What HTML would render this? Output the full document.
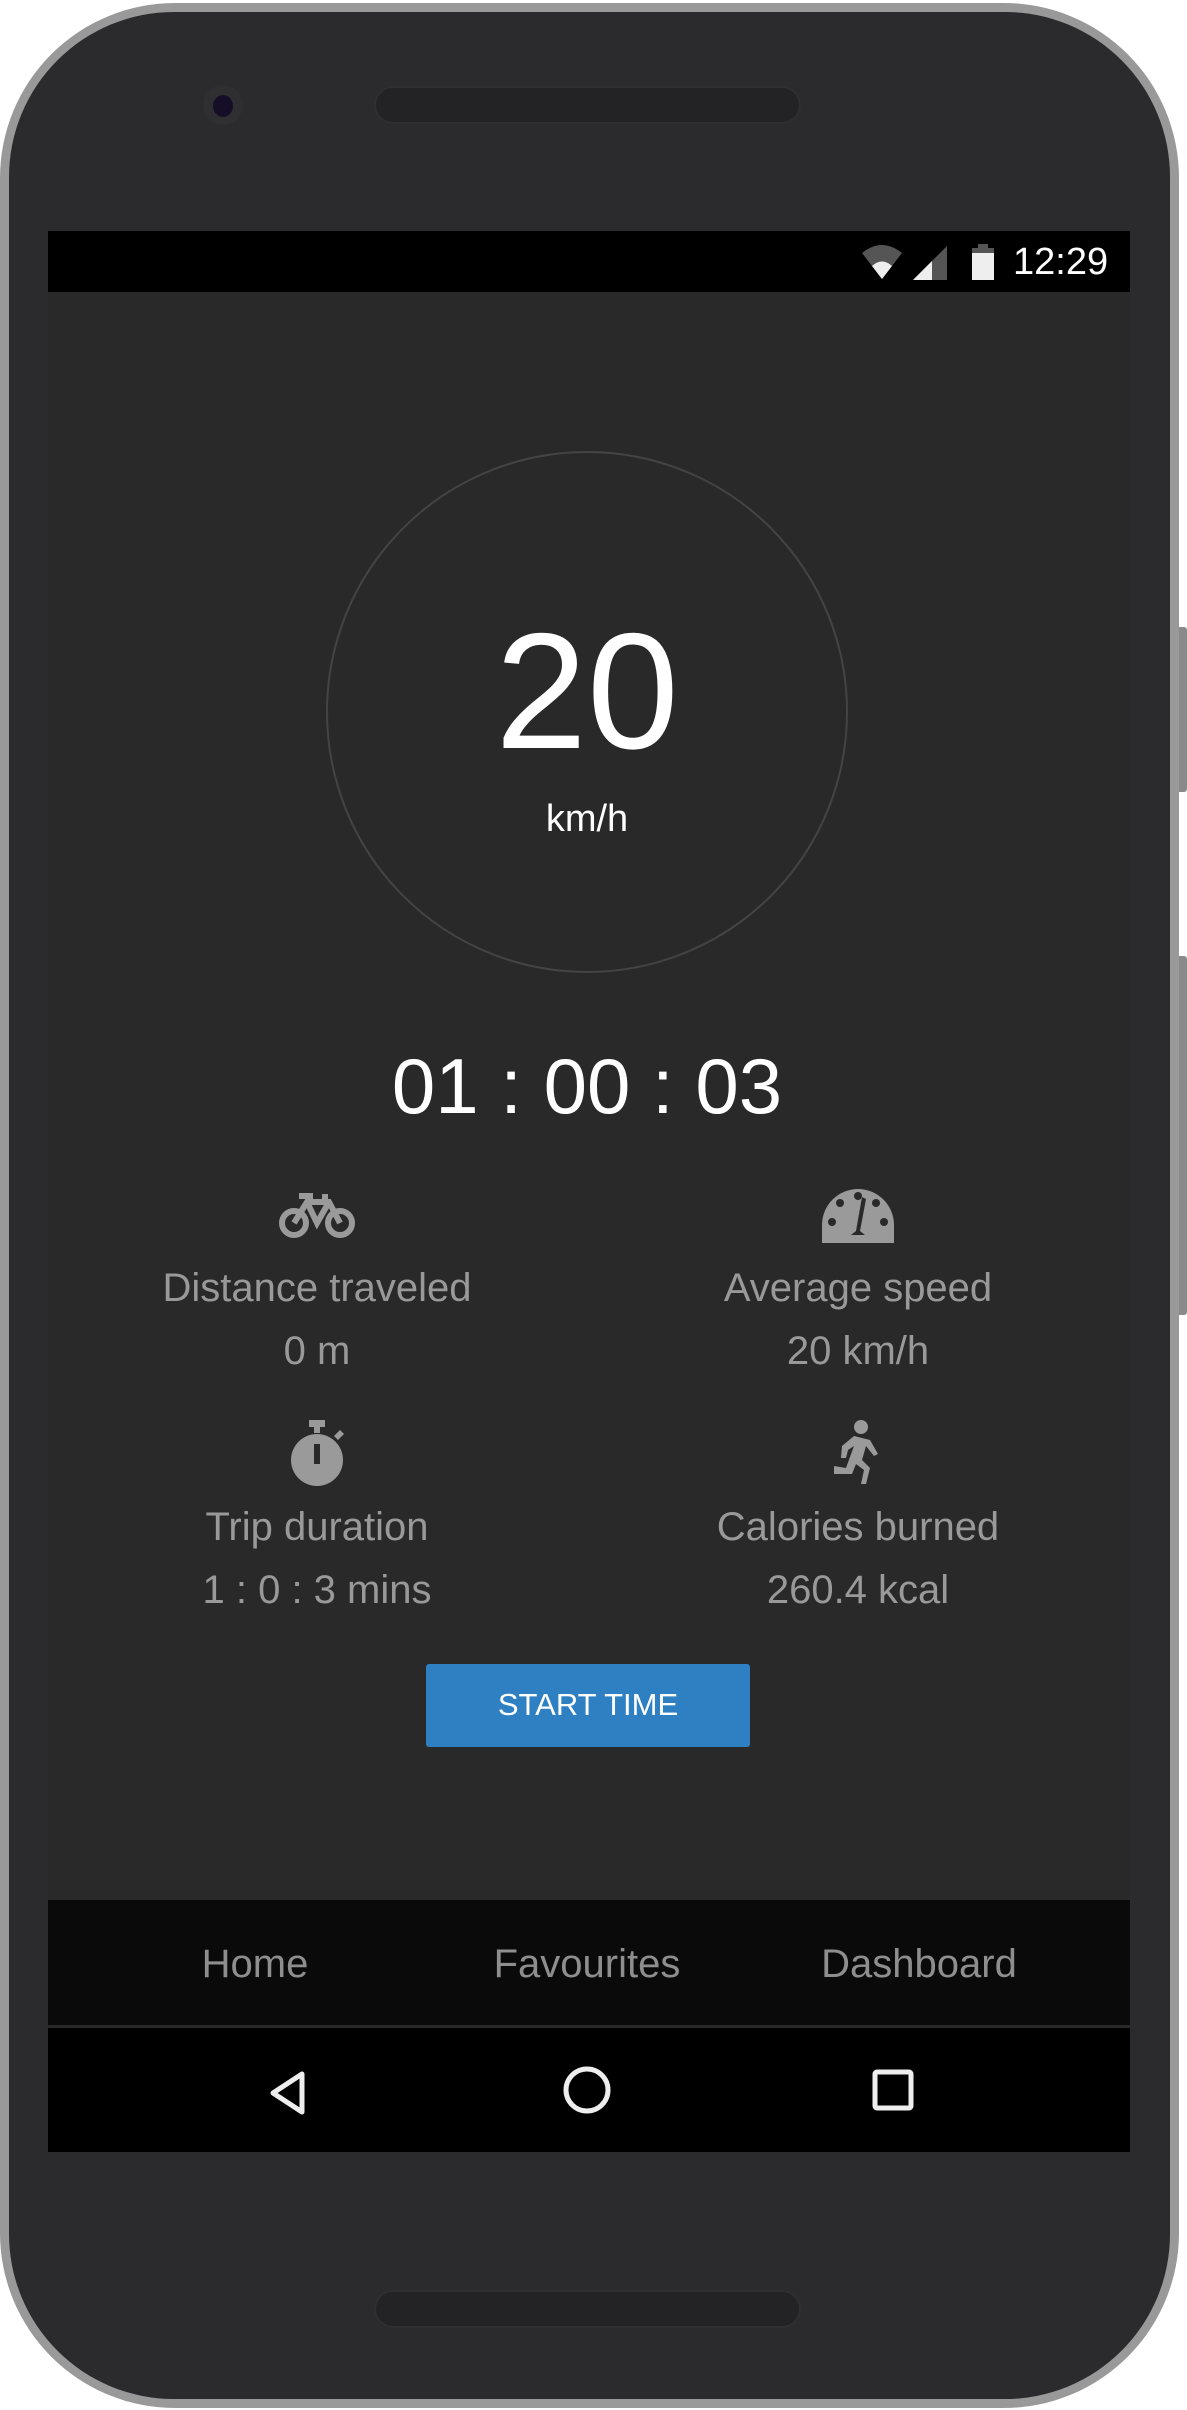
<!DOCTYPE html>
<html><head><meta charset="utf-8"><style>
html,body{margin:0;padding:0;background:#fff;}
body{width:1187px;height:2410px;position:relative;overflow:hidden;font-family:"Liberation Sans",sans-serif;}
.a{position:absolute;}
.t{position:absolute;text-align:center;white-space:nowrap;}
</style></head><body>
<div class="a" style="left:1174px;top:627px;width:13px;height:165px;background:#8a8a8a;border-radius:0 3px 3px 0"></div>
<div class="a" style="left:1174px;top:956px;width:13px;height:359px;background:#8a8a8a;border-radius:0 3px 3px 0"></div>
<div class="a" style="left:0;top:3px;width:1179px;height:2405px;background:#999;border-radius:175px"></div>
<div class="a" style="left:9px;top:12px;width:1161px;height:2387px;background:#2b2a2d;border-radius:165px"></div>
<div class="a" style="left:203px;top:85px;width:40px;height:40px;border-radius:50%;background:#2f2e31"></div>
<div class="a" style="left:213px;top:95px;width:20px;height:22px;border-radius:50%;background:#160e26"></div>
<div class="a" style="left:374px;top:86px;width:427px;height:38px;border-radius:19px;background:#232224;border:2px solid #2f2e30;box-sizing:border-box"></div>
<div class="a" style="left:374px;top:2290px;width:427px;height:38px;border-radius:19px;background:#232224;border:2px solid #2f2e30;box-sizing:border-box"></div>
<!-- screen -->
<div class="a" style="left:48px;top:231px;width:1082px;height:1921px;background:#292929"></div>
<div class="a" style="left:48px;top:231px;width:1082px;height:61px;background:#000"></div>
<svg class="a" style="left:860px;top:243px" width="150" height="40" viewBox="0 0 150 40">
<path d="M2 10 Q22 -6 42 10 L22 36 Z" fill="#555"/><path d="M12 23 Q22 14 32 23 L22 36 Z" fill="#eee"/>
<path d="M53 37 L87 37 L87 3 Z" fill="#555"/><path d="M53 37 L72 37 L72 18 Z" fill="#eee"/>
<rect x="112" y="5" width="22" height="32" fill="#eee"/><rect x="118" y="1" width="10" height="5" fill="#555"/><rect x="112" y="5" width="22" height="5" fill="#555"/>
</svg>
<div class="t" style="left:1013px;top:241px;font-size:38px;color:#fff;">12:29</div>
<div class="a" style="left:326px;top:451px;width:522px;height:522px;border-radius:50%;border:2px solid #444;box-sizing:border-box"></div>
<div class="t" style="left:387px;top:596px;width:400px;font-size:165px;color:#fff;line-height:190px">20</div>
<div class="t" style="left:487px;top:798px;width:200px;font-size:38px;color:#fff;">km/h</div>
<div class="t" style="left:287px;top:1041px;width:600px;font-size:78px;color:#fff;">01 : 00 : 03</div>
<!-- icons -->
<svg class="a" style="left:277px;top:1190px" width="82" height="50" viewBox="0 0 82 50" fill="none" stroke="#9a9a9a" stroke-width="6">
<circle cx="17" cy="33" r="12"/><circle cx="63" cy="33" r="12"/><path d="M17 33 L30 12 L52 12 L63 33 M30 12 L40 33 L52 12 M22 6 L36 6 M48 4 L48 12"/></svg>
<svg class="a" style="left:822px;top:1187px" width="72" height="56" viewBox="0 0 72 56"><path d="M0 56 L0 38 A36 36 0 0 1 72 38 L72 56 Z" fill="#9a9a9a"/>
<circle cx="10" cy="35" r="4" fill="#292929"/><circle cx="62" cy="35" r="4" fill="#292929"/><circle cx="18" cy="16" r="4" fill="#292929"/><circle cx="54" cy="16" r="4" fill="#292929"/><circle cx="36" cy="9" r="4" fill="#292929"/>
<path d="M40 10 L44 12 L38 44 L43 48 L29 48 L34 44 Z" fill="#292929"/></svg>
<svg class="a" style="left:290px;top:1420px" width="56" height="66" viewBox="0 0 56 66"><rect x="19" y="0" width="16" height="7" fill="#9a9a9a"/><rect x="24" y="5" width="6" height="8" fill="#9a9a9a"/><ellipse cx="27" cy="40" rx="26" ry="26" fill="#9a9a9a"/><path d="M44 16 L50 10 L54 14 L48 20Z" fill="#9a9a9a"/><rect x="24" y="24" width="6" height="20" fill="#292929"/></svg>
<svg class="a" style="left:828px;top:1420px" width="60" height="66" viewBox="0 0 60 66" fill="#9a9a9a"><circle cx="33" cy="7" r="7"/><path d="M26 16 L42 20 L50 34 L46 36 L38 26 L34 40 L42 48 L38 64 L33 64 L36 50 L28 44 L24 54 L6 54 L6 46 L18 48 L26 26 L20 30 L18 38 L13 38 L14 26Z"/></svg>
<div class="t" style="left:117px;top:1266px;width:400px;font-size:40px;color:#999;">Distance traveled</div>
<div class="t" style="left:117px;top:1329px;width:400px;font-size:40px;color:#999;">0 m</div>
<div class="t" style="left:658px;top:1266px;width:400px;font-size:40px;color:#999;">Average speed</div>
<div class="t" style="left:658px;top:1329px;width:400px;font-size:40px;color:#999;">20 km/h</div>
<div class="t" style="left:117px;top:1505px;width:400px;font-size:40px;color:#999;">Trip duration</div>
<div class="t" style="left:117px;top:1568px;width:400px;font-size:40px;color:#999;">1 : 0 : 3 mins</div>
<div class="t" style="left:658px;top:1505px;width:400px;font-size:40px;color:#999;">Calories burned</div>
<div class="t" style="left:658px;top:1568px;width:400px;font-size:40px;color:#999;">260.4 kcal</div>
<div class="a" style="left:426px;top:1664px;width:324px;height:83px;background:#2f80c3;border-radius:3px"></div>
<div class="t" style="left:426px;top:1687px;width:324px;font-size:31px;color:#fff;">START TIME</div>
<!-- bottom nav -->
<div class="a" style="left:48px;top:1900px;width:1082px;height:125px;background:#0a0a0a"></div>
<div class="t" style="left:105px;top:1942px;width:300px;font-size:40px;color:#8e8e8e;">Home</div>
<div class="t" style="left:437px;top:1942px;width:300px;font-size:40px;color:#8e8e8e;">Favourites</div>
<div class="t" style="left:769px;top:1942px;width:300px;font-size:40px;color:#8e8e8e;">Dashboard</div>
<div class="a" style="left:48px;top:2028px;width:1082px;height:124px;background:#000"></div>
<svg class="a" style="left:48px;top:2028px" width="1082" height="124" viewBox="0 0 1082 124" fill="none" stroke="#eee" stroke-width="5">
<path d="M254 46 L254 84 L225 65 Z" stroke-linejoin="round"/><circle cx="539" cy="62" r="21"/><rect x="827" y="44" width="36" height="36" rx="2"/></svg>
</body></html>
